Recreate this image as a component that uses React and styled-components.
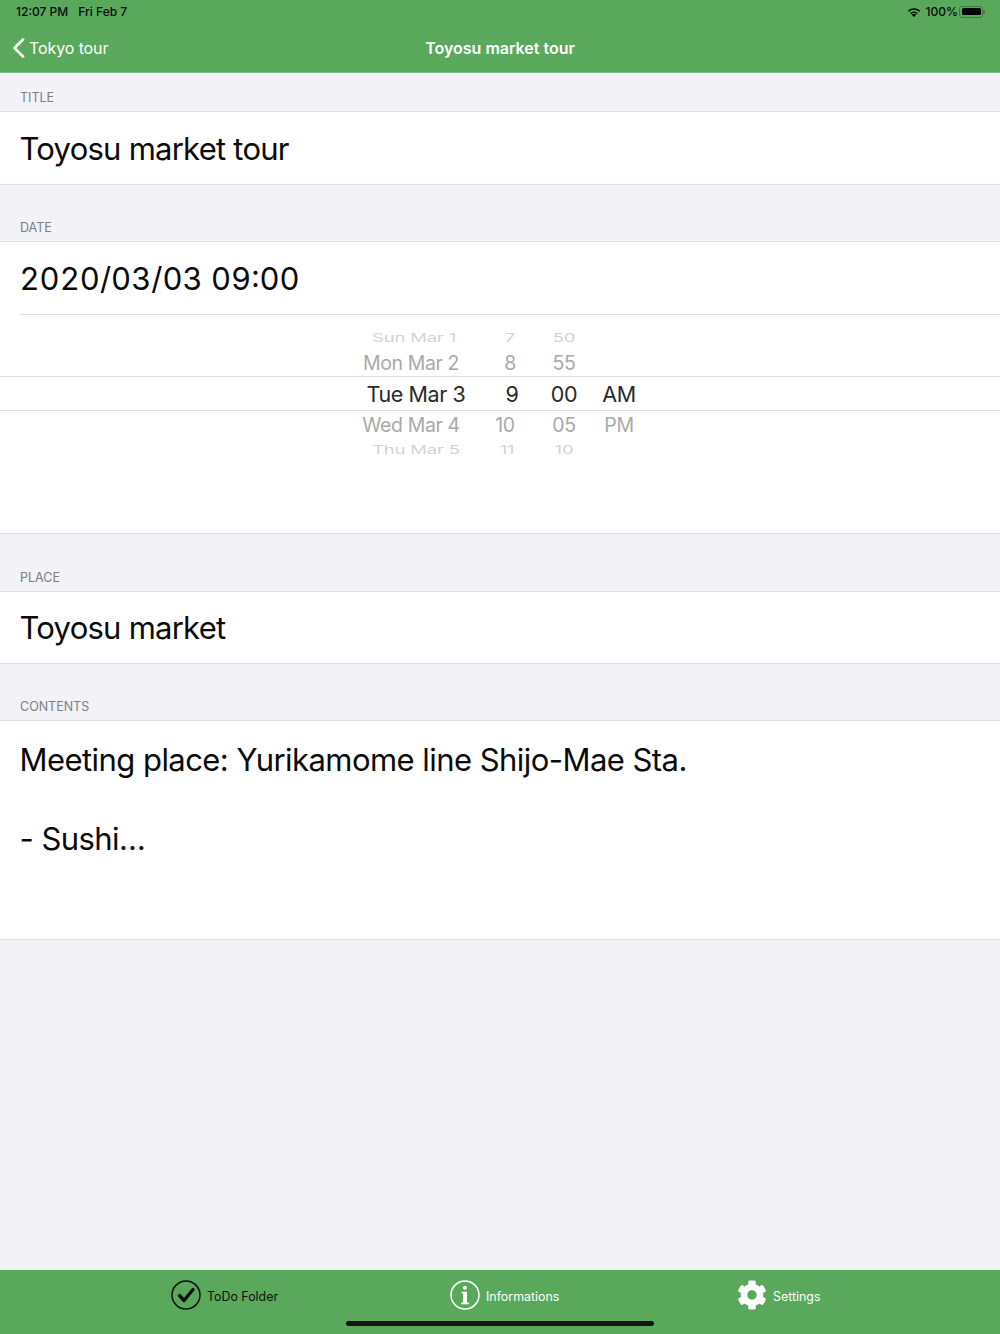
import React from "react";
import styled, { createGlobalStyle } from "styled-components";
import { FaCog } from "react-icons/fa";

const GlobalStyle = createGlobalStyle`
  html, body {
    margin: 0;
    padding: 0;
    background: #f2f2f7;
  }
  * {
    box-sizing: border-box;
  }
`;

const pickerRows = [
  { kind: "far", drop: 1, cells: [["Sun Mar 1", 1], ["7", 2], ["50", 0], ["", 0]] },
  { kind: "near", drop: 0, cells: [["Mon Mar 2", -2], ["8", 2], ["55", 0], ["", 0]] },
  { kind: "selected", drop: 0, cells: [["Tue Mar 3", 3], ["9", 4], ["00", 0], ["AM", 0]] },
  { kind: "near", drop: 0, cells: [["Wed Mar 4", -2], ["10", -3], ["05", 0], ["PM", 0]] },
  { kind: "far", drop: 0, cells: [["Thu Mar 5", 3], ["11", -1], ["10", 0], ["", 0]] },
];

const App = () => {
  return (
    <Page>
      <GlobalStyle />
      <Header>
        <StatusBar>
          <StatusText>
            12:07 PM<StatusDate>Fri Feb 7</StatusDate>
          </StatusText>
          <StatusRight>
            <svg width="14" height="10" viewBox="0 0 14 10">
              <path d="M7 10 4.8 7.7a3.2 3.2 0 0 1 4.4 0Z" fill="#000" />
              <path d="M3.2 6.1a5.500 5.500 0 0 1 7.600 0l-1 1.050a4.100 4.100 0 0 0-5.600 0Z" fill="#000" />
              <path d="M.8 3.700a9 9 0 0 1 12.400 0l-1.050 1.100a7.500 7.500 0 0 0-10.300 0Z" fill="#000" />
            </svg>
            <span>100%</span>
            <Battery>
              <BatteryFill />
            </Battery>
          </StatusRight>
        </StatusBar>
        <NavBar>
          <BackLink>
            <svg width="13" height="20" viewBox="0 0 13 20">
              <path d="M11 1.500 2.500 10l8.500 8.500" fill="none" stroke="#fff" strokeWidth="2.600" strokeLinecap="round" strokeLinejoin="round" />
            </svg>
            Tokyo tour
          </BackLink>
          <NavTitle>Toyosu market tour</NavTitle>
        </NavBar>
      </Header>

      <SectionLabel $height={39}>TITLE</SectionLabel>
      <FieldRow>Toyosu market tour</FieldRow>

      <SectionLabel $height={57}>DATE</SectionLabel>
      <DateBlock>
        <FieldRow $inset>2020/03/03 09:00</FieldRow>
        <Picker>
          {pickerRows.map((row, i) => (
            <WheelRow key={i} $kind={row.kind}>
              {row.cells.map(([text, shift], j) => (
                <WheelCell key={j} $kind={row.kind} $shift={shift} $drop={row.drop}>
                  <span>{text}</span>
                </WheelCell>
              ))}
            </WheelRow>
          ))}
        </Picker>
      </DateBlock>

      <SectionLabel $height={58}>PLACE</SectionLabel>
      <FieldRow $height={72}>Toyosu market</FieldRow>

      <SectionLabel $height={57}>CONTENTS</SectionLabel>
      <ContentsBox>
        <ContentsLine>Meeting place: Yurikamome line Shijo-Mae Sta.</ContentsLine>
        <ContentsLine>- Sushi…</ContentsLine>
      </ContentsBox>

      <Spacer />

      <TabBar>
        <TabItem>
          <svg width="30" height="30" viewBox="0 0 30 30">
            <circle cx="15" cy="15" r="14" fill="none" stroke="#111" strokeWidth="1.500" />
            <path d="M8.500 15.500 13 20.500 22 9.500" fill="none" stroke="#111" strokeWidth="3.400" strokeLinecap="round" strokeLinejoin="round" />
          </svg>
          <TabLabel $active>ToDo Folder</TabLabel>
        </TabItem>
        <TabItem>
          <svg width="30" height="30" viewBox="0 0 30 30">
            <circle cx="15" cy="15" r="14" fill="none" stroke="#fff" strokeWidth="1.500" />
            <circle cx="15" cy="7.800" r="2" fill="#fff" />
            <path d="M11.800 11.800h5.200v10.400l1.800.6v1.500h-7.600v-1.500l1.800-.6v-8.600l-1.800-.4Z" fill="#fff" />
          </svg>
          <TabLabel>Informations</TabLabel>
        </TabItem>
        <TabItem>
          <FaCog size={30} color="#fff" />
          <TabLabel>Settings</TabLabel>
        </TabItem>
        <HomeIndicator />
      </TabBar>
    </Page>
  );
};

const Page = styled.div`
  display: flex;
  flex-direction: column;
  width: 1000px;
  height: 1334px;
  overflow: hidden;
  background: #f2f2f7;
  font-family: Inter, "Liberation Sans", sans-serif;
`;

const Header = styled.header`
  height: 73px;
  flex-shrink: 0;
  background: #59a85c;
  border-bottom: 1px solid #7fbc81;
`;

const StatusBar = styled.div`
  display: flex;
  align-items: center;
  justify-content: space-between;
  height: 23px;
  padding: 0 17px 0 16px;
  color: #0a0a0a;
  font-size: 12px;
  font-weight: 500;
`;

const StatusText = styled.div`
  white-space: nowrap;
`;

const StatusDate = styled.span`
  margin-left: 10px;
`;

const StatusRight = styled.div`
  display: flex;
  align-items: center;
  gap: 4px;

  svg {
    margin-right: 1px;
  }

  span {
    margin-right: -3px;
  }
`;

const Battery = styled.div`
  position: relative;
  width: 24px;
  height: 12px;
  padding: 1.5px;
  border: 1px solid #3f7a41;
  border-radius: 3px;

  &::after {
    content: "";
    position: absolute;
    top: 3px;
    right: -3px;
    width: 2px;
    height: 4px;
    border-radius: 0 1px 1px 0;
    background: #3f7a41;
  }
`;

const BatteryFill = styled.div`
  height: 100%;
  border-radius: 1.5px;
  background: #000;
`;

const NavBar = styled.nav`
  position: relative;
  display: flex;
  align-items: center;
  justify-content: center;
  height: 49px;
`;

const BackLink = styled.div`
  position: absolute;
  top: 0;
  left: 12px;
  bottom: 0;
  display: flex;
  align-items: center;
  gap: 4px;
  color: #fff;
  font-size: 16px;
  letter-spacing: -0.1px;
`;

const NavTitle = styled.div`
  color: #fff;
  font-size: 16px;
  font-weight: 600;
`;

const SectionLabel = styled.div`
  display: flex;
  flex-shrink: 0;
  align-items: flex-end;
  height: ${(props) => props.$height}px;
  padding: 0 20px 6px;
  border-bottom: 1px solid #dedee3;
  color: #7d7d82;
  font-size: 12.5px;
`;

const FieldRow = styled.div`
  display: flex;
  align-items: center;
  flex-shrink: 0;
  height: ${(props) => props.$height || 73}px;
  margin-left: ${(props) => (props.$inset ? "19.5px" : "0")};
  padding-left: ${(props) => (props.$inset ? "0" : "19.5px")};
  border-bottom: 1px solid #dedee3;
  background: #fff;
  color: #0a0a0a;
  font-size: 31px;
  letter-spacing: ${(props) => (props.$inset ? "0" : "-0.75px")};
  font-variant-numeric: ${(props) => (props.$inset ? "tabular-nums" : "normal")};
`;

const DateBlock = styled.div`
  flex-shrink: 0;
  background: #fff;
  border-bottom: 1px solid #dedee3;
`;

const Picker = styled.div`
  height: 218px;
  padding-top: 10px;
  background: #fff;
`;

const rowHeights = { far: 24, near: 27, selected: 35 };
const rowFonts = { far: 18.5, near: 19.5, selected: 21.5 };

const WheelRow = styled.div`
  display: grid;
  grid-template-columns: 353px 120px 70px 42px 68px 1fr;
  align-items: center;
  height: ${(props) => rowHeights[props.$kind]}px;
  border-top: ${(props) => (props.$kind === "selected" ? "1px solid #dedee0" : "none")};
  border-bottom: ${(props) => (props.$kind === "selected" ? "1px solid #dedee0" : "none")};
`;

const WheelCell = styled.div`
  white-space: nowrap;
  text-align: center;
  font-size: ${(props) => rowFonts[props.$kind]}px;
  letter-spacing: ${(props) => (props.$kind === "far" ? "-0.2px" : "-0.4px")};
  color: ${(props) =>
    props.$kind === "selected" ? "#2a2a2a" : props.$kind === "near" ? "#a9a9a9" : "#d2d2d2"};

  &:first-child {
    grid-column: 2;
  }

  span {
    display: inline-block;
    transform: translate(${(props) => props.$shift}px, ${(props) => props.$drop}px)
      scaleY(${(props) => (props.$kind === "far" ? 0.62 : 1)});
  }
`;

const ContentsBox = styled.div`
  flex-shrink: 0;
  height: 219px;
  padding: 19px 19.5px 0;
  border-bottom: 1px solid #dedee3;
  background: #fff;
  color: #0a0a0a;
  font-size: 31px;
  letter-spacing: -0.55px;
`;

const ContentsLine = styled.div`
  height: 39px;
  line-height: 39px;

  & + & {
    margin-top: 40px;
  }
`;

const Spacer = styled.div`
  flex: 1;
`;

const TabBar = styled.footer`
  position: relative;
  display: grid;
  grid-template-columns: 279px 287px auto;
  flex-shrink: 0;
  height: 64px;
  padding: 10px 0 0 171px;
  background: #59a85c;
`;

const TabItem = styled.div`
  display: flex;
  align-items: flex-start;
  gap: 6px;
`;

const TabLabel = styled.span`
  margin-top: 9px;
  color: ${(props) => (props.$active ? "#111" : "#fff")};
  font-size: 12.400px;
`;

const HomeIndicator = styled.div`
  position: absolute;
  left: 346px;
  bottom: 8px;
  width: 308px;
  height: 5px;
  border-radius: 3px;
  background: #151515;
`;

export default App;
